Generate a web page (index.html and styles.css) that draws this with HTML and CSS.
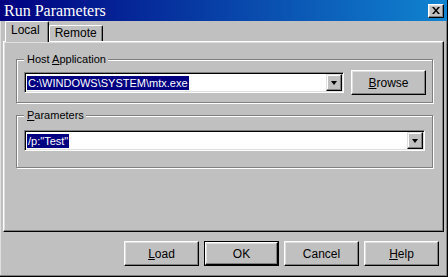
FILE: index.html
```html
<!DOCTYPE html>
<html lang="en">
<head>
  <meta charset="UTF-8">
  <title>Run Parameters</title>
  <link rel="stylesheet" href="styles.css">
</head>
<body>
  <div class="window">
    <div class="titlebar">
      <span class="title">Run Parameters</span>
      <button class="close">
        <svg width="8" height="7" viewBox="0 0 8 7"><path d="M0 0h2l2 2.5 2-2.5h2l-3 3.5 3 3.5h-2l-2-2.5-2 2.5h-2l3-3.5z" fill="#000"/></svg>
      </button>
    </div>

    <div class="tabs">
      <div class="tab active">Local</div>
      <div class="tab">Remote</div>
    </div>

    <div class="panel">
      <fieldset class="group host">
        <legend>Host <u>A</u>pplication</legend>
        <div class="row">
          <div class="combo host-combo">
            <div class="value"><span class="sel">C:\WINDOWS\SYSTEM\mtx.exe</span></div>
            <div class="drop"><span class="arrow"></span></div>
          </div>
          <button class="btn browse"><u>B</u>rowse</button>
        </div>
      </fieldset>

      <fieldset class="group params">
        <legend><u>P</u>arameters</legend>
        <div class="combo">
          <div class="value"><span class="sel">/p:"Test"</span></div>
          <div class="drop"><span class="arrow"></span></div>
        </div>
      </fieldset>
    </div>

    <div class="footer">
      <button class="btn"><u>L</u>oad</button>
      <button class="btn default">OK</button>
      <button class="btn">Cancel</button>
      <button class="btn"><u>H</u>elp</button>
    </div>
  </div>
</body>
</html>
```

FILE: styles.css
```css
body {
  margin: 0;
  background: #c0c0c0;
  font-family: "Liberation Sans", Arial, sans-serif;
  font-size: 11px;
  color: #000;
}

.window {
  width: 448px;
  height: 277px;
  box-sizing: border-box;
  background: #c0c0c0;
  border-right: 1px solid #000;
  border-bottom: 1px solid #000;
  box-shadow: inset -1px -1px 0 #808080, inset 1px 0 0 #dfdfdf;
  display: flex;
  flex-direction: column;
}

.titlebar {
  height: 21px;
  background: linear-gradient(to right, #000080, #1084d0);
  color: #fff;
  display: flex;
  align-items: center;
  justify-content: space-between;
  padding: 0 3px 0 4px;
}

.title {
  font-family: "Liberation Serif", "Times New Roman", serif;
  font-size: 16px;
}

.close {
  width: 16px;
  height: 14px;
  box-sizing: border-box;
  padding: 0;
  background: #c0c0c0;
  border: 1px solid;
  border-color: #fff #000 #000 #fff;
  box-shadow: inset -1px -1px 0 #808080, inset 1px 1px 0 #dfdfdf;
  display: flex;
  align-items: center;
  justify-content: center;
}

.tabs {
  display: flex;
  align-items: flex-end;
  height: 20px;
  padding-left: 5px;
  position: relative;
  z-index: 1;
}

.tab {
  box-sizing: border-box;
  height: 16px;
  padding: 0 5px;
  line-height: 14px;
  font-size: 12px;
  border-top: 1px solid #fff;
  border-left: 1px solid #fff;
  border-right: 1px solid #000;
  border-radius: 2px 2px 0 0;
  box-shadow: inset -1px 0 0 #808080;
  background: #c0c0c0;
}

.tab.active {
  height: 21px;
  margin-bottom: -1px;
  padding: 0 8px 0 5px;
  line-height: 17px;
}

.panel {
  height: 191px;
  box-sizing: border-box;
  margin: 0 3px;
  padding: 0 10px 0 12px;
  border: 1px solid;
  border-color: #fff #000 #000 #fff;
  box-shadow: inset -1px -1px 0 #808080, inset 1px 1px 0 #dfdfdf;
}

.group {
  margin: 11px 0 0;
  border: 1px solid #808080;
  box-shadow: inset 1px 1px 0 #fff, 1px 1px 0 #fff;
}

.group legend {
  padding: 0 2px 0 3px;
  line-height: 13px;
  background: #c0c0c0;
}

.host {
  padding: 4px 6px 7px 7px;
}

.params {
  margin-top: 6px;
  padding: 8px 7px 16px 7px;
}

.row {
  display: flex;
  align-items: center;
  gap: 7px;
}

.combo {
  display: flex;
  align-items: center;
  height: 21px;
  box-sizing: border-box;
  padding: 1px;
  background: #fff;
  border: 1px solid;
  border-color: #808080 #fff #fff #808080;
  box-shadow: inset 1px 1px 0 #000, inset -1px -1px 0 #dfdfdf;
}

.host-combo {
  width: 320px;
}

.combo .value {
  flex: 1;
  padding-left: 1px;
}

.sel {
  background: #000080;
  color: #fff;
  padding: 0 1px;
  line-height: 14px;
  display: inline-block;
}

.drop {
  width: 16px;
  height: 17px;
  box-sizing: border-box;
  background: #c0c0c0;
  border: 1px solid;
  border-color: #dfdfdf #000 #000 #dfdfdf;
  box-shadow: inset -1px -1px 0 #808080, inset 1px 1px 0 #fff;
  display: flex;
  align-items: center;
  justify-content: center;
}

.arrow {
  width: 0;
  height: 0;
  border-left: 3.5px solid transparent;
  border-right: 3.5px solid transparent;
  border-top: 4px solid #000;
}

.btn {
  width: 75px;
  height: 25px;
  box-sizing: border-box;
  padding: 0;
  font-family: "Liberation Sans", Arial, sans-serif;
  font-size: 12px;
  color: #000;
  background: #c0c0c0;
  border: 1px solid;
  border-color: #fff #000 #000 #fff;
  box-shadow: inset -1px -1px 0 #808080, inset 1px 1px 0 #dfdfdf;
}

.btn.default {
  border: 2px solid #000;
  border-left-color: #fff;
  border-top-color: #fff;
  outline: 1px solid #000;
  outline-offset: -1px;
}

.footer {
  display: flex;
  justify-content: flex-end;
  gap: 5px;
  padding: 9px 8px 0 0;
}
```
